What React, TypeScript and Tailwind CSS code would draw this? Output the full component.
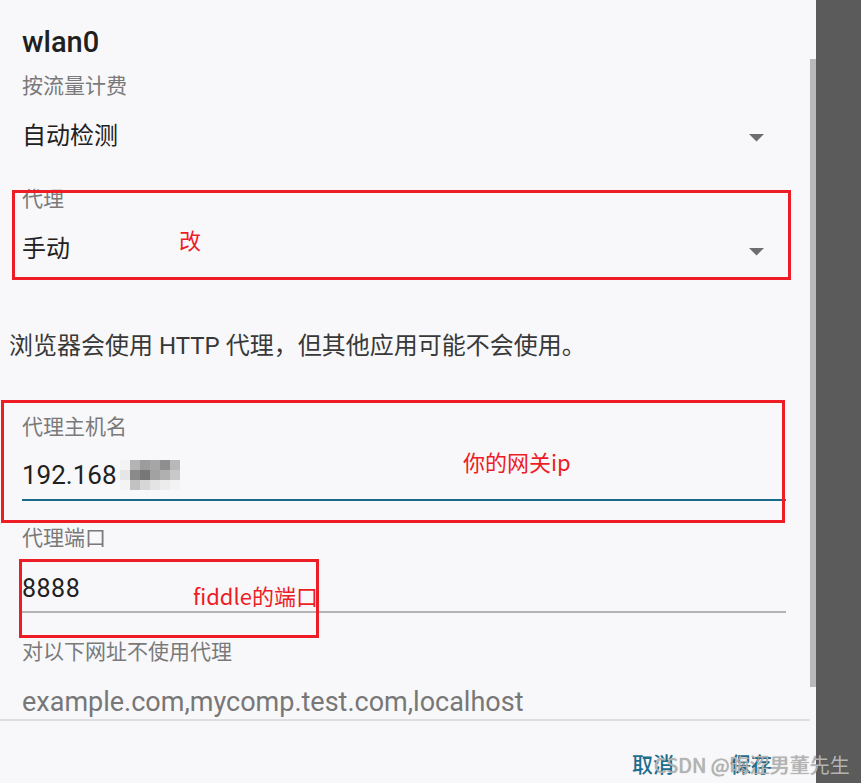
import React from "react";

const FONT = "font-['Roboto','Noto_Sans_CJK_SC',sans-serif]";
const CJK = "font-['Noto_Sans_CJK_SC',sans-serif]";

function Caret() {
  return (
    <svg width="15" height="8" viewBox="0 0 15 8" className="block">
      <path d="M0 0 L15 0 L7.5 7.5 Z" fill="#6e6e6e" />
    </svg>
  );
}

function Mosaic() {
  const cells = [
    ["#f3f3f3", "#b4b4b4", "#9c9c9c", "#a6a6a6", "#8e8e8e", "#b8b8b8"],
    ["#e6e6e6", "#8a8a8a", "#777777", "#a2a2a2", "#b0b0b0", "#c9c9c9"],
    ["#f4f4f4", "#c2c2c2", "#d6d6d6", "#e4e4e4", "#ececec", "#f3f3f3"],
  ];
  return (
    <div className="grid grid-cols-[repeat(6,10px)] grid-rows-[repeat(3,10px)] ml-[3px]">
      {cells.flat().map((c, i) => (
        <div key={i} style={{ background: c }} />
      ))}
    </div>
  );
}

export default function App() {
  return (
    <div className={`relative flex w-[861px] h-[783px] overflow-hidden ${FONT}`}>
      <div className="relative w-[816px] h-full bg-[#f8f8fa] flex flex-col">
        <div className="flex flex-col pl-[22px] pr-[52px] pt-[26px] h-[719px]">
          <div className="h-[32px] leading-[32px] text-[29px] font-medium text-[#202020]">wlan0</div>
          <div className="mt-[14px] h-[28px] leading-[28px] text-[21px] text-[#7a7a7a]">按流量计费</div>
          <div className="mt-[20px] h-[32px] leading-[32px] text-[24px] text-[#212121] flex items-center justify-between">
            <span>自动检测</span>
            <div className="mt-[3px]"><Caret /></div>
          </div>
          <div className="mt-[33px] h-[28px] leading-[28px] text-[21px] text-[#7a7a7a]">代理</div>
          <div className="mt-[20px] h-[32px] leading-[32px] text-[24px] text-[#212121] flex items-center justify-between">
            <span>手动</span>
            <div className="mt-[5px]"><Caret /></div>
          </div>
          <div className="mt-[66px] ml-[-13px] h-[30px] leading-[30px] text-[24px] text-[#383838] whitespace-nowrap">
            浏览器会使用 HTTP 代理，但其他应用可能不会使用。
          </div>
          <div className="mt-[52px] h-[28px] leading-[28px] text-[21px] text-[#7a7a7a]">代理主机名</div>
          <div className="mt-[18px] h-[32px] leading-[32px] text-[26px] text-[#212121] flex items-center">
            <span>192.168</span>
            <Mosaic />
          </div>
          <div className="mt-[8px] mr-[-22px] h-[2px] bg-[#1a6a8c]" />
          <div className="mt-[23px] h-[28px] leading-[28px] text-[21px] text-[#7a7a7a]">代理端口</div>
          <div className="mt-[21px] h-[32px] leading-[32px] text-[25px] text-[#212121] tracking-[0.02em]">8888</div>
          <div className="mt-[6px] mr-[-22px] h-[2px] bg-[#b3b3b3]" />
          <div className="mt-[25px] h-[28px] leading-[28px] text-[21px] text-[#7a7a7a]">对以下网址不使用代理</div>
          <div className="mt-[20px] h-[32px] leading-[32px] text-[27px] text-[#777777] whitespace-nowrap">
            example.com,mycomp.test.com,localhost
          </div>
        </div>
        <div className="h-[2px] w-[810px] bg-[#dedede]" />
        <div className="flex-1 flex items-start justify-end pr-[44px] pt-[29px] gap-[56px] text-[21px] leading-[30px] font-medium text-[#1d6d8d]">
          <span>取消</span>
          <span>保存</span>
        </div>

        {/* scrollbar */}
        <div className="absolute left-[810px] top-[59px] w-[6px] h-[628px] bg-[#b9b9b9]" />

        {/* annotations */}
        <div className="absolute left-[12px] top-[190px] w-[779px] h-[90px] border-[3px] border-[#ee1c25]" />
        <div className="absolute left-[1px] top-[400px] w-[784px] h-[123px] border-[3px] border-[#ee1c25]" />
        <div className="absolute left-[19px] top-[559px] w-[300px] h-[79px] border-[3px] border-[#ee1c25]" />
        <div className={`absolute left-[179px] top-[228px] text-[22px] leading-[22px] text-[#ee1c25] ${CJK}`}>改</div>
        <div className={`absolute left-[463px] top-[450px] text-[22px] leading-[22px] text-[#ee1c25] whitespace-nowrap ${CJK}`}>你的网关ip</div>
        <div className={`absolute left-[193px] top-[584px] text-[22px] leading-[22px] text-[#ee1c25] whitespace-nowrap ${CJK}`}>fiddle的端口</div>
      </div>
      <div className="flex-1 h-full bg-[#5b5b5b]" />
      <div className={`absolute left-[654px] top-[753px] text-[20px] leading-[24px] text-[#b4b4b4] whitespace-nowrap [text-shadow:0_0_1px_rgba(80,80,80,0.6)] ${CJK}`}>
        CSDN @晦涩男董先生
      </div>
    </div>
  );
}
